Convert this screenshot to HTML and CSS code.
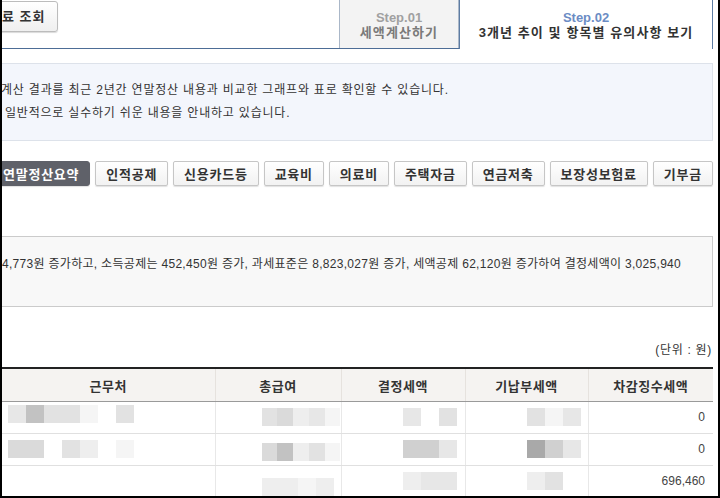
FILE: index.html
```html
<!DOCTYPE html>
<html lang="ko">
<head>
    <meta charset="UTF-8">
    <meta name="viewport" content="width=device-width, initial-scale=1.0">
    <title>연말정산 3개년 추이</title>
    <link rel="stylesheet" href="styles.css">
</head>
<body>
    <div class="frame">
        <div class="page">
            <div class="top">
                <a href="#" class="lookup-button">료 조회</a>
                <div class="steps">
                    <div class="step">
                        <span class="step-no">Step.01</span>
                        <span class="step-name">세액계산하기</span>
                    </div>
                    <div class="step step-on">
                        <span class="step-no">Step.02</span>
                        <span class="step-name">3개년 추이 및 항목별 유의사항 보기</span>
                    </div>
                </div>
            </div>

            <div class="guide">
                <p>계산 결과를 최근 2년간 연말정산 내용과 비교한 그래프와 표로 확인할 수 있습니다.</p>
                <p class="guide-second">일반적으로 실수하기 쉬운 내용을 안내하고 있습니다.</p>
            </div>

            <div class="item-tabs">
                <button class="item-button item-on">연말정산요약</button>
                <button class="item-button">인적공제</button>
                <button class="item-button">신용카드등</button>
                <button class="item-button">교육비</button>
                <button class="item-button">의료비</button>
                <button class="item-button">주택자금</button>
                <button class="item-button">연금저축</button>
                <button class="item-button">보장성보험료</button>
                <button class="item-button">기부금</button>
            </div>

            <div class="summary">
                <p>64,773원 증가하고, 소득공제는 452,450원 증가, 과세표준은 8,823,027원 증가, 세액공제 62,120원 증가하여 결정세액이 3,025,940</p>
            </div>

            <div class="unit">(단위 : 원)</div>

            <table class="tax-table">
                <colgroup>
                    <col class="col-name">
                    <col class="col-pay">
                    <col class="col-amt">
                    <col class="col-amt2">
                    <col class="col-diff">
                </colgroup>
                <thead>
                    <tr>
                        <th>근무처</th>
                        <th>총급여</th>
                        <th>결정세액</th>
                        <th>기납부세액</th>
                        <th>차감징수세액</th>
                    </tr>
                </thead>
                <tbody>
                    <tr>
                        <td><div class="blur blur-name"><i class="k6"></i><i class="k2"></i><i class="k5"></i><i class="k5"></i><i class="k8"></i><i></i><i class="k5"></i></div></td>
                        <td><div class="blur blur-pay"><i class="k5"></i><i class="k4"></i><i class="k7"></i><i class="k6"></i><i class="k8"></i></div></td>
                        <td><div class="blur blur-amt"><i class="k6"></i><i></i><i class="k5"></i></div></td>
                        <td><div class="blur blur-amt"><i class="k5"></i><i class="k8"></i><i class="k6"></i></div></td>
                        <td class="num">0</td>
                    </tr>
                    <tr>
                        <td><div class="blur blur-name2"><i class="k4"></i><i class="k4"></i><i></i><i class="k5"></i><i class="k7"></i><i></i><i class="k8"></i></div></td>
                        <td><div class="blur blur-pay2"><i class="k4"></i><i class="k2"></i><i class="k7"></i><i class="k5"></i><i class="k8"></i></div></td>
                        <td><div class="blur blur-amt"><i class="k3"></i><i class="k3"></i><i class="k6"></i></div></td>
                        <td><div class="blur blur-amt"><i class="k1"></i><i class="k3"></i><i class="k6"></i></div></td>
                        <td class="num">0</td>
                    </tr>
                    <tr>
                        <td></td>
                        <td><div class="blur blur-pay3"><i class="k7"></i><i class="k7"></i><i class="k8"></i><i class="k7"></i></div></td>
                        <td><div class="blur blur-amt"><i class="k7"></i><i class="k6"></i><i class="k6"></i></div></td>
                        <td><div class="blur blur-amt"><i class="k7"></i><i class="k5"></i></div></td>
                        <td class="num">696,460</td>
                    </tr>
                </tbody>
            </table>
        </div>
    </div>
</body>
</html>
```

FILE: styles.css
```css
body {
    margin: 0;
    font-family: "Liberation Sans", "Noto Sans CJK KR", sans-serif;
    font-size: 12px;
    color: #333;
    background-color: #fff;
}
p {
    margin: 0;
}
.frame {
    width: 720px;
    height: 498px;
    box-sizing: border-box;
    border: 2px solid #000;
    border-top: 0;
    overflow: hidden;
}
.page {
    width: 711px;
}

/* top: lookup button + step tabs */
.top {
    display: flex;
    justify-content: space-between;
    align-items: flex-start;
    height: 48px;
    border-bottom: 1px solid #4d6d96;
}
.lookup-button {
    display: block;
    margin: 1px 0 0 -12px;
    height: 31px;
    box-sizing: border-box;
    padding: 0 11px 0 11px;
    line-height: 29px;
    border: 1px solid #bcbcbc;
    border-radius: 3px;
    background: linear-gradient(#fff, #efefef);
    box-shadow: 0 1px 1px rgba(0, 0, 0, 0.15);
    font-size: 13px;
    font-weight: bold;
    letter-spacing: 1px;
    color: #333;
    text-decoration: none;
}
.steps {
    display: flex;
    height: 48px;
}
.step {
    width: 120px;
    height: 48px;
    box-sizing: border-box;
    padding-top: 10px;
    border-left: 1px solid #aab7c8;
    border-right: 1px solid #aab7c8;
    background-color: #f3f3f3;
    text-align: center;
}
.step-on {
    width: 254px;
    height: 49px;
    border-color: #5d7ca3;
    background-color: #fff;
}
.step-no, .step-name {
    display: block;
    font-size: 13px;
    font-weight: bold;
    line-height: 15px;
}
.step-no {
    color: #a0a0a0;
}
.step-name {
    letter-spacing: 1.1px;
    color: #7a7a7a;
}
.step-on .step-no {
    color: #6b8cc4;
}
.step-on .step-name {
    color: #333;
}

/* guide box */
.guide {
    margin-top: 14px;
    padding: 15px 0;
    border: 1px solid #dde2ea;
    border-left: 0;
    background-color: #f3f6fc;
    line-height: 23px;
    letter-spacing: 0.8px;
    color: #333;
}
.guide p {
    margin-left: -1px;
}
.guide .guide-second {
    margin-left: 3px;
}

/* item buttons */
.item-tabs {
    display: flex;
    justify-content: space-between;
    margin-top: 20px;
}
.item-button {
    height: 25px;
    padding: 0 10px;
    border: 1px solid #c6c6c6;
    border-radius: 2px;
    background: linear-gradient(#fff, #f2f2f2);
    box-shadow: 0 1px 1px rgba(0, 0, 0, 0.12);
    font-family: inherit;
    font-size: 13px;
    font-weight: bold;
    letter-spacing: 0.75px;
    color: #333;
    white-space: nowrap;
    cursor: pointer;
}
.item-on {
    margin-left: -10px;
    border-color: #5f6169;
    border-radius: 3px;
    background: #5f6169;
    color: #fff;
}

/* summary */
.summary {
    margin-top: 50px;
    height: 71px;
    box-sizing: border-box;
    padding-top: 18px;
    border: 1px solid #cbcbcb;
    border-left: 0;
    background-color: #f8f8f8;
    line-height: 18px;
    letter-spacing: 0.3px;
    white-space: nowrap;
}
.summary p {
    margin-left: -7px;
}
.unit {
    margin-top: 34px;
    padding-right: 1px;
    line-height: 18px;
    letter-spacing: 0.7px;
    text-align: right;
}

/* table */
.tax-table {
    width: 711px;
    margin-top: 8px;
    border-collapse: collapse;
    table-layout: fixed;
    border-top: 2px solid #222;
}
.col-name { width: 213px; }
.col-pay { width: 126px; }
.col-amt { width: 124px; }
.col-amt2 { width: 123px; }
.col-diff { width: 125px; }
.tax-table th {
    height: 32px;
    padding: 0;
    border-bottom: 1px solid #9a9a9a;
    border-left: 1px solid #e6e2de;
    background-color: #f5f3f1;
    font-size: 13px;
    font-weight: bold;
    letter-spacing: 0.5px;
    color: #333;
}
.tax-table th:first-child, .tax-table td:first-child {
    border-left: 0;
}
.tax-table td {
    height: 31px;
    padding: 0;
    border-bottom: 1px solid #e0e0e0;
    border-left: 1px solid #e8e8e8;
    vertical-align: top;
}
.tax-table .num {
    padding-right: 8px;
    line-height: 31px;
    text-align: right;
    color: #444;
}
.blur {
    display: flex;
}
.blur i {
    width: 18px;
    height: 18px;
}
.blur-name { margin: 3px 0 0 6px; }
.blur-name2 { margin: 6px 0 0 6px; }
.blur-pay { margin: 6px 0 0 46px; }
.blur-pay2 { margin: 9px 0 0 46px; }
.blur-pay3 { margin: 12px 0 0 46px; }
.blur-amt { margin: 6px 0 0 61px; }
.k1 { background-color: #a9a9a9; }
.k2 { background-color: #c2c2c2; }
.k3 { background-color: #d0d0d0; }
.k4 { background-color: #dadada; }
.k5 { background-color: #e2e2e2; }
.k6 { background-color: #e7e7e7; }
.k7 { background-color: #eeeeee; }
.k8 { background-color: #f5f5f5; }
```
